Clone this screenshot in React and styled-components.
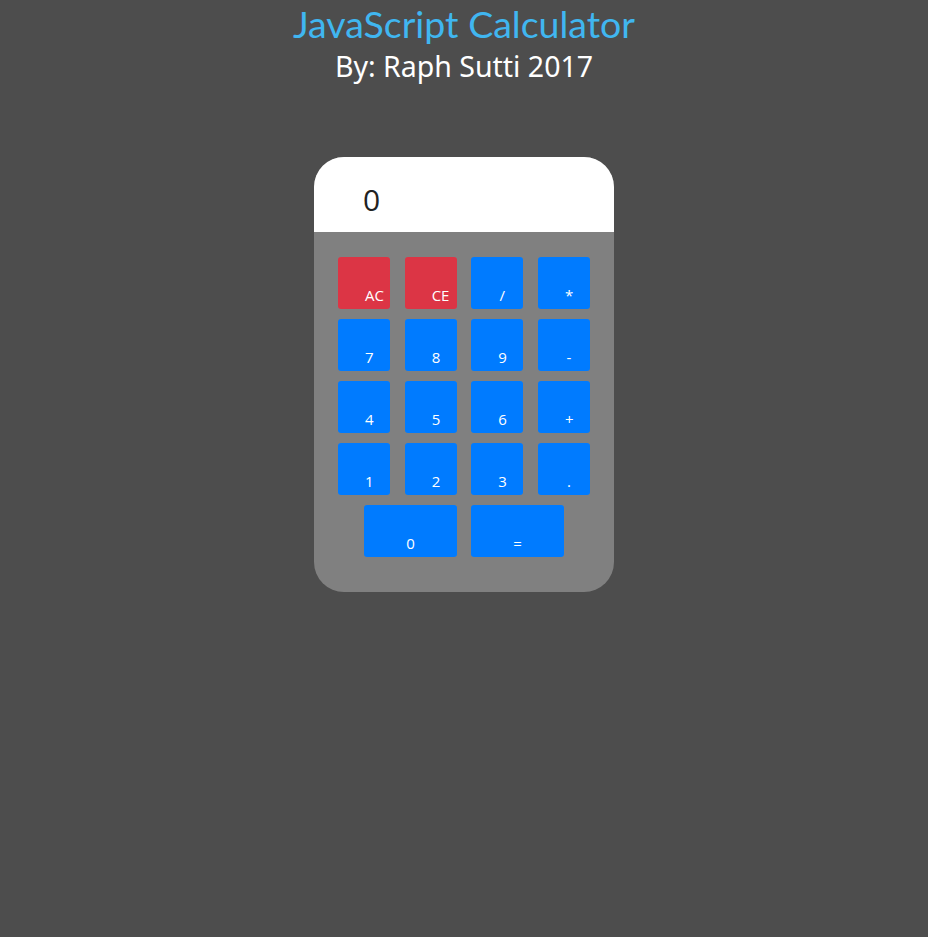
import React from "react";
import styled, { createGlobalStyle } from "styled-components";

const keyRows = [
  [
    { label: "AC", tone: "red" },
    { label: "CE", tone: "red" },
    { label: "/" },
    { label: "*" },
  ],
  [{ label: "7" }, { label: "8" }, { label: "9" }, { label: "-" }],
  [{ label: "4" }, { label: "5" }, { label: "6" }, { label: "+" }],
  [{ label: "1" }, { label: "2" }, { label: "3" }, { label: "." }],
];

export default function App() {
  return (
    <>
      <GlobalStyle />
      <Page>
        <Header>
          <Title>JavaScript Calculator</Title>
          <Byline>By: Raph Sutti 2017</Byline>
        </Header>
        <Calculator>
          <Display>0</Display>
          <Pad>
            <KeyGrid>
              {keyRows.flat().map(({ label, tone }) => (
                <Key key={label} $tone={tone}>
                  {label}
                </Key>
              ))}
            </KeyGrid>
            <BottomRow>
              <Key $wide>0</Key>
              <Key $wide>=</Key>
            </BottomRow>
          </Pad>
        </Calculator>
      </Page>
    </>
  );
}

const GlobalStyle = createGlobalStyle`
  html, body {
    margin: 0;
    background: #4d4d4d;
    min-height: 100%;
  }
  body {
    font-family: "Open Sans", "Noto Sans", sans-serif;
  }
`;

const Page = styled.div`
  min-height: 937px;
  display: flex;
  flex-direction: column;
  align-items: center;
`;

const Header = styled.header`
  display: flex;
  flex-direction: column;
  align-items: center;
  padding-top: 2px;
`;

const Title = styled.h1`
  margin: 0;
  font-family: "Lato", sans-serif;
  font-weight: 400;
  font-size: 37.5px;
  line-height: 44px;
  color: #40b6f0;
`;

const Byline = styled.h2`
  margin: 0;
  font-family: "Noto Sans", sans-serif;
  font-weight: 400;
  font-size: 28.5px;
  line-height: 40px;
  color: #ffffff;
`;

const Calculator = styled.div`
  margin-top: 71px;
  width: 300px;
  border-radius: 30px;
  overflow: hidden;
  background: #808080;
`;

const Display = styled.div`
  height: 75px;
  box-sizing: border-box;
  padding: 23px 0 0 49px;
  background: #ffffff;
  color: #222222;
  font-family: "Open Sans", sans-serif;
  font-size: 30px;
  line-height: 40px;
`;

const Pad = styled.div`
  padding: 25px 24px 35px;
  display: flex;
  flex-direction: column;
  gap: 10px;
`;

const KeyGrid = styled.div`
  display: grid;
  grid-template-columns: repeat(4, 52px);
  justify-content: space-between;
  row-gap: 10px;
`;

const BottomRow = styled.div`
  display: flex;
  justify-content: center;
  gap: 14px;
`;

const Key = styled.button`
  display: block;
  width: ${({ $wide }) => ($wide ? "93px" : "52px")};
  height: 52px;
  box-sizing: border-box;
  border: none;
  border-radius: 3px;
  padding: ${({ $wide }) => ($wide ? "24px 0 0 0" : "24px 17px 0 27px")};
  text-align: center;
  vertical-align: top;
  white-space: nowrap;
  background: ${({ $tone }) => ($tone === "red" ? "#dc3545" : "#007bff")};
  color: #ffffff;
  font-family: "Open Sans", sans-serif;
  font-size: 15px;
  line-height: 20px;
  cursor: pointer;
`;
